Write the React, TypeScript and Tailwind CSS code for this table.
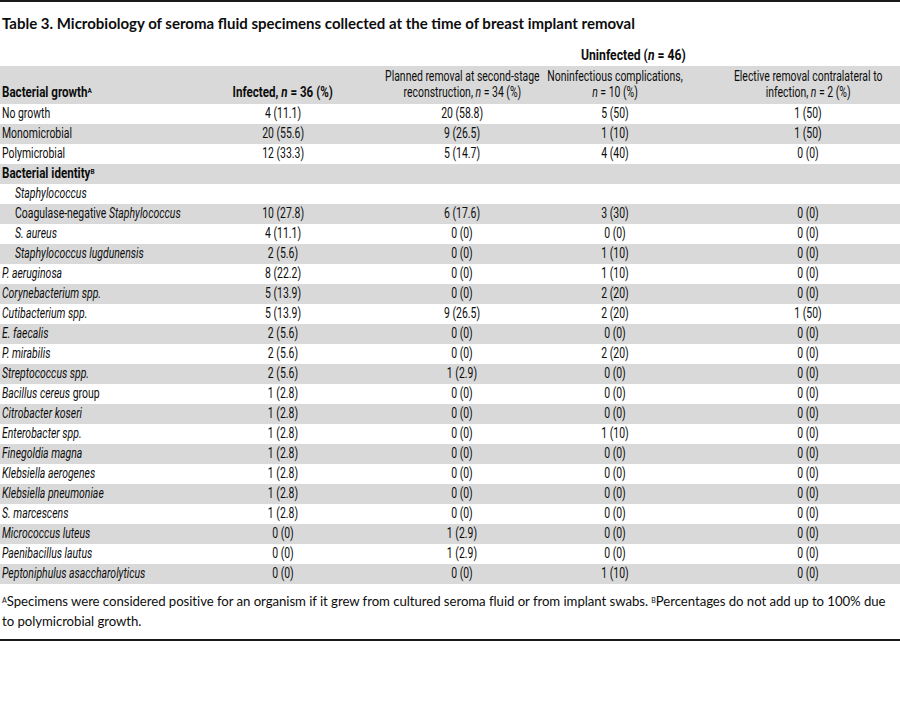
type Row = {
  label: React.ReactNode
  vals?: string[]
  indent?: boolean
  bold?: boolean
}

const rows: Row[] = [
  { label: 'No growth', vals: ['4 (11.1)', '20 (58.8)', '5 (50)', '1 (50)'] },
  { label: 'Monomicrobial', vals: ['20 (55.6)', '9 (26.5)', '1 (10)', '1 (50)'] },
  { label: 'Polymicrobial', vals: ['12 (33.3)', '5 (14.7)', '4 (40)', '0 (0)'] },
  {
    label: (
      <>
        Bacterial identity<sup className="text-[8px]">B</sup>
      </>
    ),
    bold: true,
  },
  { label: <i>Staphylococcus</i>, indent: true },
  {
    label: (
      <>
        Coagulase-negative <i>Staphylococcus</i>
      </>
    ),
    indent: true,
    vals: ['10 (27.8)', '6 (17.6)', '3 (30)', '0 (0)'],
  },
  { label: <i>S. aureus</i>, indent: true, vals: ['4 (11.1)', '0 (0)', '0 (0)', '0 (0)'] },
  { label: <i>Staphylococcus lugdunensis</i>, indent: true, vals: ['2 (5.6)', '0 (0)', '1 (10)', '0 (0)'] },
  { label: <i>P. aeruginosa</i>, vals: ['8 (22.2)', '0 (0)', '1 (10)', '0 (0)'] },
  { label: <i>Corynebacterium spp.</i>, vals: ['5 (13.9)', '0 (0)', '2 (20)', '0 (0)'] },
  { label: <i>Cutibacterium spp.</i>, vals: ['5 (13.9)', '9 (26.5)', '2 (20)', '1 (50)'] },
  { label: <i>E. faecalis</i>, vals: ['2 (5.6)', '0 (0)', '0 (0)', '0 (0)'] },
  { label: <i>P. mirabilis</i>, vals: ['2 (5.6)', '0 (0)', '2 (20)', '0 (0)'] },
  { label: <i>Streptococcus spp.</i>, vals: ['2 (5.6)', '1 (2.9)', '0 (0)', '0 (0)'] },
  {
    label: (
      <>
        <i>Bacillus cereus</i> group
      </>
    ),
    vals: ['1 (2.8)', '0 (0)', '0 (0)', '0 (0)'],
  },
  { label: <i>Citrobacter koseri</i>, vals: ['1 (2.8)', '0 (0)', '0 (0)', '0 (0)'] },
  { label: <i>Enterobacter spp.</i>, vals: ['1 (2.8)', '0 (0)', '1 (10)', '0 (0)'] },
  { label: <i>Finegoldia magna</i>, vals: ['1 (2.8)', '0 (0)', '0 (0)', '0 (0)'] },
  { label: <i>Klebsiella aerogenes</i>, vals: ['1 (2.8)', '0 (0)', '0 (0)', '0 (0)'] },
  { label: <i>Klebsiella pneumoniae</i>, vals: ['1 (2.8)', '0 (0)', '0 (0)', '0 (0)'] },
  { label: <i>S. marcescens</i>, vals: ['1 (2.8)', '0 (0)', '0 (0)', '0 (0)'] },
  { label: <i>Micrococcus luteus</i>, vals: ['0 (0)', '1 (2.9)', '0 (0)', '0 (0)'] },
  { label: <i>Paenibacillus lautus</i>, vals: ['0 (0)', '1 (2.9)', '0 (0)', '0 (0)'] },
  { label: <i>Peptoniphulus asaccharolyticus</i>, vals: ['0 (0)', '0 (0)', '1 (10)', '0 (0)'] },
]

const cols = 'grid grid-cols-[200px_166px_192px_114px_228px]'

// the journal's table face is a narrow sans; squeeze Roboto to the same footprint
function Narrow({ children, left, bold }: { children: React.ReactNode; left?: boolean; bold?: boolean }) {
  return (
    <span
      className={`inline-block whitespace-nowrap ${bold ? 'scale-x-[0.8] font-bold' : 'scale-x-[0.72]'} ${
        left ? 'origin-left' : 'origin-center text-center'
      }`}
    >
      {children}
    </span>
  )
}

function Cell({ children, extra = '', bold }: { children: React.ReactNode; extra?: string; bold?: boolean }) {
  return (
    <div className={`flex justify-center ${extra}`}>
      <Narrow bold={bold}>{children}</Narrow>
    </div>
  )
}

export default function App() {
  return (
    <div className="w-[900px] overflow-hidden bg-white text-[#0d0d0d] font-['Roboto','Liberation_Sans',sans-serif]">
      <div className="border-t-2 border-[#1a1a1a] pt-[11px]">
        <h1 className="pl-[2px] font-['Lato','Open_Sans',sans-serif] text-[15px] font-bold leading-[20px]">
          Table 3. Microbiology of seroma fluid specimens collected at the time of breast implant removal
        </h1>
      </div>

      <div className="mt-[14px] text-[14.5px]">
        <div className={cols}>
          <div className="col-span-2" />
          <div className="col-span-3 flex h-[18px] items-center justify-center">
            <span className="inline-block origin-center scale-x-[0.84] whitespace-nowrap font-bold">
              Uninfected (<i>n</i> = 46)
            </span>
          </div>
        </div>

        <div className={`${cols} mt-[1px] h-[38px] bg-[#d9d9d9] pt-[3px] leading-[16px]`}>
          <div className="self-end pb-[3px] pl-[2px]">
            <Narrow left bold>
              Bacterial growth<sup className="text-[8px]">A</sup>
            </Narrow>
          </div>
          <Cell extra="self-end pb-[3px]" bold>
            Infected, <i>n</i> = 36 (%)
          </Cell>
          <Cell>
            Planned removal at second-stage
            <br />
            reconstruction, <i>n</i> = 34 (%)
          </Cell>
          <Cell>
            Noninfectious complications,
            <br />
            <i>n</i> = 10 (%)
          </Cell>
          <Cell extra="pl-[44px]">
            Elective removal contralateral to
            <br />
            infection, <i>n</i> = 2 (%)
          </Cell>
        </div>

        {rows.map((r, i) => (
          <div
            key={i}
            className={`${cols} h-[20px] items-center leading-[20px] ${i % 2 === 1 ? 'bg-[#d9d9d9]' : 'bg-white'}`}
          >
            <div className={r.indent ? 'pl-[15px]' : 'pl-[2px]'}>
              <Narrow left bold={r.bold}>
                {r.label}
              </Narrow>
            </div>
            {r.vals ? (
              <>
                <Cell>{r.vals[0]}</Cell>
                <Cell>{r.vals[1]}</Cell>
                <Cell>{r.vals[2]}</Cell>
                <Cell extra="pl-[44px]">{r.vals[3]}</Cell>
              </>
            ) : null}
          </div>
        ))}
      </div>

      <div className="border-b-2 border-[#1a1a1a] pt-[7px] pb-[8px] pl-[2px] font-['Lato','Open_Sans',sans-serif] text-[13.2px] tracking-[-0.05px] leading-[20px]">
        <sup className="text-[7px]">A</sup>Specimens were considered positive for an organism if it grew from cultured seroma fluid or
        from implant swabs. <sup className="text-[7px]">B</sup>Percentages do not add up to 100% due to polymicrobial growth.
      </div>
    </div>
  )
}
